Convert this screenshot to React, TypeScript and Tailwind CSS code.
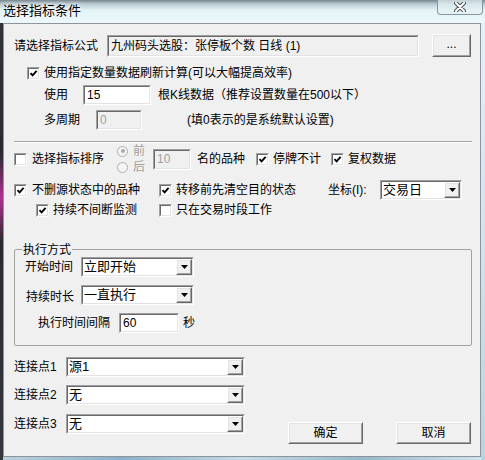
import React from "react";

const FONT = "font-['Liberation_Sans','Noto_Sans_CJK_SC',sans-serif]";

const Check = ({ on }: { on?: boolean }) => (
  <span className="w-[13px] h-[13px] shrink-0 flex border border-t-[#a0a0a0] border-l-[#a0a0a0] border-b-white border-r-white">
    <span className="flex-1 flex items-center justify-center bg-white border border-t-[#696969] border-l-[#696969] border-b-[#e3e3e3] border-r-[#e3e3e3]">
      {on && (
        <svg width="9" height="9" viewBox="0 0 9 9">
          <path d="M1.5 4.2 L3.6 6.4 L7.6 1.8" stroke="#000" strokeWidth="1.9" fill="none" />
        </svg>
      )}
    </span>
  </span>
);

const Sunken = ({ className, children }: { className: string; children?: React.ReactNode }) => (
  <div className={"flex shrink-0 border border-t-[#a0a0a0] border-l-[#a0a0a0] border-b-white border-r-white " + className}>
    <div className="flex-1 flex items-center min-w-0 border border-t-[#696969] border-l-[#696969] border-b-[#e3e3e3] border-r-[#e3e3e3]">
      {children}
    </div>
  </div>
);

const Raised = ({ className, children }: { className: string; children?: React.ReactNode }) => (
  <div className={"flex shrink-0 bg-[#f0f0f0] border border-t-white border-l-white border-b-[#696969] border-r-[#696969] " + className}>
    <div className="flex-1 flex items-center justify-center border border-t-[#e3e3e3] border-l-[#e3e3e3] border-b-[#a0a0a0] border-r-[#a0a0a0]">
      {children}
    </div>
  </div>
);

const Combo = ({ className, text }: { className: string; text: string }) => (
  <Sunken className={"h-[20px] bg-white " + className}>
    <span className="flex-1 pl-[1px] text-[13px] leading-[16px] text-black whitespace-nowrap overflow-hidden">{text}</span>
    <Raised className="w-[16px] h-[16px]">
      <svg width="7" height="4" viewBox="0 0 7 4">
        <path d="M0 0 H7 L3.5 4 Z" fill="#000" />
      </svg>
    </Raised>
  </Sunken>
);

const Radio = ({ on }: { on?: boolean }) => (
  <span className="w-[11px] h-[11px] rounded-full border border-[#b0b0b0] bg-[#f4f4f4] flex items-center justify-center shrink-0">
    {on && <span className="w-[4px] h-[4px] rounded-full bg-[#a8a8a8]" />}
  </span>
);

export default function App() {
  return (
    <div className={"w-[485px] h-[460px] overflow-hidden flex flex-col text-[12px] text-black bg-[#dcecf2] " + FONT}>
      {/* title bar */}
      <div className="h-[23px] shrink-0 flex items-start relative bg-[linear-gradient(to_bottom,#77838c_0px,#b9ccd3_4px,#e2f2f5_10px,#eef8fa_23px)]">
        <span className="pl-[3px] pt-[3px] text-[13px] leading-[16px] [text-shadow:0_0_6px_#fff,0_0_3px_#fff]">选择指标条件</span>
        <div className="absolute left-[437px] top-0 w-[46px] h-[15px] rounded-b-[4px] border border-t-0 border-[#8a96a0] bg-[#e4f1f4]/70 flex items-center justify-center">
          <svg width="12" height="10" viewBox="0 0 12 10">
            <path d="M2 1 L10 9 M10 1 L2 9" stroke="#4a5058" strokeWidth="4" strokeLinecap="round" />
            <path d="M2 1 L10 9 M10 1 L2 9" stroke="#fff" strokeWidth="2" strokeLinecap="round" />
          </svg>
        </div>
      </div>

      <div className="flex flex-1">
        <div className="w-[3px] shrink-0 bg-[linear-gradient(to_bottom,#303338_0%,#2a2a30_30%,#b03090_40%,#2a2a30_50%,#34383e_100%)]" />
        <div className="w-[478px] shrink-0 flex flex-col">
          <div className="h-[434px] bg-[#f0f0f0] border border-[#8e9499] flex flex-col pl-[10px] pr-[8px]">
            {/* formula row */}
            <div className="mt-[10px] h-[23px] flex items-center">
              <span className="w-[93px] leading-[16px]">请选择指标公式</span>
              <Sunken className="w-[312px] h-[22px] bg-[#f0f0f0]">
                <span className="pl-[2px] leading-[16px] whitespace-nowrap">九州码头选股：张停板个数 日线 (1)</span>
              </Sunken>
              <Raised className="ml-[13px] w-[39px] h-[23px]">
                <span className="leading-[10px] -mt-[3px]">...</span>
              </Raised>
            </div>

            {/* use fixed count */}
            <div className="mt-[8px] h-[16px] flex items-center pl-[13px] gap-[4px]">
              <Check on />
              <span className="leading-[16px] whitespace-nowrap">使用指定数量数据刷新计算(可以大幅提高效率)</span>
            </div>

            <div className="mt-[4px] h-[20px] flex items-center pl-[30px]">
              <span className="w-[39px] leading-[16px]">使用</span>
              <Sunken className="w-[68px] h-[20px] bg-white">
                <span className="pl-[2px] leading-[16px]">15</span>
              </Sunken>
              <span className="ml-[7px] leading-[16px] whitespace-nowrap">根K线数据（推荐设置数量在500以下）</span>
            </div>

            <div className="mt-[5px] h-[20px] flex items-center pl-[30px]">
              <span className="w-[52px] leading-[16px]">多周期</span>
              <Sunken className="w-[46px] h-[20px] bg-[#f0f0f0]">
                <span className="pl-[2px] leading-[16px] text-[#a0a0a0]">0</span>
              </Sunken>
              <span className="ml-[45px] leading-[16px] whitespace-nowrap">(填0表示的是系统默认设置)</span>
            </div>

            {/* separator */}
            <div className="mt-[11px] h-[2px] border-t border-t-[#a0a0a0] border-b border-b-white" />

            {/* sort row */}
            <div className="mt-[4px] h-[24px] flex items-center">
              <Check />
              <span className="ml-[5px] leading-[16px] whitespace-nowrap">选择指标排序</span>
              <div className="ml-[13px] flex flex-col text-[#a0a0a0]">
                <div className="h-[16px] flex items-center gap-[5px]">
                  <Radio on />
                  <span className="leading-[16px]">前</span>
                </div>
                <div className="h-[16px] flex items-center gap-[5px]">
                  <Radio />
                  <span className="leading-[16px]">后</span>
                </div>
              </div>
              <Sunken className="ml-[8px] w-[38px] h-[21px] bg-[#f0f0f0]">
                <span className="pl-[2px] leading-[16px] text-[#a0a0a0]">10</span>
              </Sunken>
              <span className="ml-[6px] leading-[16px] whitespace-nowrap">名的品种</span>
              <div className="ml-[11px] flex items-center gap-[4px]">
                <Check on />
                <span className="leading-[16px] whitespace-nowrap">停牌不计</span>
              </div>
              <div className="ml-[10px] flex items-center gap-[4px]">
                <Check on />
                <span className="leading-[16px] whitespace-nowrap">复权数据</span>
              </div>
            </div>

            {/* state row */}
            <div className="mt-[9px] h-[20px] flex items-center">
              <div className="w-[145px] flex items-center gap-[5px]">
                <Check on />
                <span className="leading-[16px] whitespace-nowrap">不删源状态中的品种</span>
              </div>
              <div className="w-[169px] flex items-center gap-[4px]">
                <Check on />
                <span className="leading-[16px] whitespace-nowrap">转移前先清空目的状态</span>
              </div>
              <span className="w-[52px] leading-[16px] whitespace-nowrap">坐标(I):</span>
              <Combo className="w-[82px]" text="交易日" />
            </div>

            <div className="mt-[2px] h-[16px] flex items-center">
              <div className="w-[145px] pl-[22px] flex items-center gap-[4px]">
                <Check on />
                <span className="leading-[16px] whitespace-nowrap">持续不间断监测</span>
              </div>
              <div className="flex items-center gap-[4px]">
                <Check />
                <span className="leading-[16px] whitespace-nowrap">只在交易时段工作</span>
              </div>
            </div>

            {/* group box */}
            <div className="mt-[31px] h-[97px] relative border border-[#a0a0a0] rounded-[2px] flex flex-col">
              <span className="absolute left-[7px] -top-[8px] px-[1px] bg-[#f0f0f0] leading-[16px]">执行方式</span>
              <div className="mt-[7px] h-[20px] flex items-center pl-[10px]">
                <span className="w-[56px] leading-[16px]">开始时间</span>
                <Combo className="w-[113px]" text="立即开始" />
              </div>
              <div className="mt-[8px] h-[20px] flex items-center pl-[11px]">
                <span className="w-[55px] leading-[16px] mt-[3px]">持续时长</span>
                <Combo className="w-[113px]" text="一直执行" />
              </div>
              <div className="mt-[8px] h-[20px] flex items-center pl-[23px]">
                <span className="w-[81px] leading-[16px]">执行时间间隔</span>
                <Sunken className="w-[60px] h-[20px] bg-white">
                  <span className="pl-[2px] leading-[16px]">60</span>
                </Sunken>
                <span className="ml-[4px] leading-[16px]">秒</span>
              </div>
            </div>

            {/* connection points */}
            <div className="mt-[11px] h-[20px] flex items-center">
              <span className="w-[52px] leading-[16px] whitespace-nowrap">连接点1</span>
              <Combo className="w-[179px]" text="源1" />
            </div>
            <div className="mt-[8px] h-[20px] flex items-center">
              <span className="w-[52px] leading-[16px] whitespace-nowrap">连接点2</span>
              <Combo className="w-[179px]" text="无" />
            </div>
            <div className="mt-[9px] flex items-start">
              <div className="h-[20px] flex items-center">
                <span className="w-[52px] leading-[16px] whitespace-nowrap">连接点3</span>
                <Combo className="w-[179px]" text="无" />
              </div>
              <Raised className="mt-[8px] ml-[43px] w-[75px] h-[22px]">
                <span className="leading-[16px]">确定</span>
              </Raised>
              <Raised className="mt-[8px] ml-[33px] w-[75px] h-[22px]">
                <span className="leading-[16px]">取消</span>
              </Raised>
            </div>
          </div>
          <div className="flex-1 bg-[linear-gradient(to_right,#b9d2e0,#8fb0c8,#c5dce8,#9ab8cc,#d0e4ee)]" />
        </div>
        <div className="flex-1 bg-[linear-gradient(to_bottom,#e2f1f6,#cfe5ef,#b7d3e3)]" />
      </div>
    </div>
  );
}
